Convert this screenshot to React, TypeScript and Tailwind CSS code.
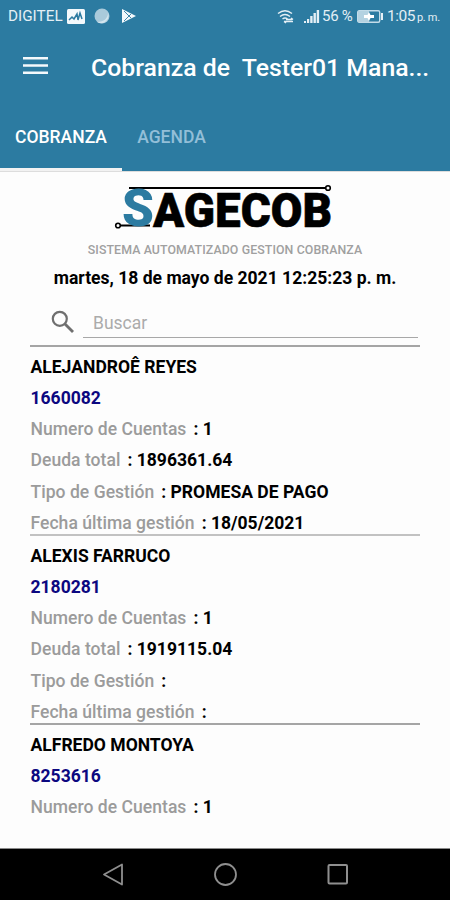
import React from 'react';

const clients = [
  { name: 'ALEJANDROÊ REYES', id: '1660082', accounts: '1', debt: '1896361.64', type: 'PROMESA DE PAGO', date: '18/05/2021', line: 'border-[#a5a5a5]' },
  { name: 'ALEXIS FARRUCO', id: '2180281', accounts: '1', debt: '1919115.04', type: '', date: '', line: 'border-[#c2c2c2]' },
  { name: 'ALFREDO MONTOYA', id: '8253616', accounts: '1', debt: '', type: '', date: '', line: 'border-[#a5a5a5]' },
];

function Field({ label, value }: { label: string; value: string }) {
  return (
    <p className="flex gap-[7px] whitespace-pre">
      <span className="font-medium tracking-[0.030px] text-[#9b9b9b]">{label}</span>
      <span>{`: ${value}`}</span>
    </p>
  );
}

function StatusBar() {
  return (
    <div className="flex h-8 items-center pl-2 text-[#e4eff5]">
      <span className="w-[59px] text-[15.300px] whitespace-nowrap">DIGITEL</span>
      <svg className="h-[15px] w-[18px]" viewBox="0 0 18 15">
        <rect width="18" height="15" rx="1.500" fill="#f4f9fc" />
        <path d="M2 11l3-3 2 2 3-5 1 6 2-7 2 6" fill="none" stroke="#2c7ba1" strokeWidth="1.500" />
      </svg>
      <svg className="ml-[9px] h-4 w-4" viewBox="0 0 16 16">
        <circle cx="8" cy="8" r="7.500" fill="#a9cadb" />
        <path d="M3 14a7.500 7.500 0 0 0 11-9c0 5-4 9-11 9z" fill="#d3e5ee" />
      </svg>
      <svg className="ml-[11px] h-4 w-4" viewBox="0 0 16 16">
        <path d="M1 1l14 7-14 7z" fill="#f4f9fc" />
        <path d="M3 3l7 7M3 13l7-7" stroke="#2c7ba1" strokeWidth="0.900" />
      </svg>
      {/* right side indicators */}
      <svg className="ml-[140px] h-[15px] w-[17px]" viewBox="0 0 17 15" fill="none" stroke="currentColor" strokeWidth="1.400">
        <path d="M1 4.500Q8 -1 15 4.500M3 7.500q5-4 10 0M5.500 10q2.500-2 5 0M7 12.500h9M9 10.500h6M14 9l2 1.500M9 14l-2-1.500" />
      </svg>
      <svg className="ml-[9px] h-[15px] w-[17px]" viewBox="0 0 17 15" fill="currentColor">
        <path d="M1 12h2v2H1zM4 10h2.200v4H4zM7.200 7H9.600v7H7.200zM10.500 4h2.400v10h-2.400zM13.700 1h2.400v13h-2.400z" />
      </svg>
      <span className="ml-[2px] w-[32px] text-[15px] tracking-[-0.3px] whitespace-nowrap">56 %</span>
      <svg className="ml-[3px] h-[13px] w-[26px]" viewBox="0 0 26 13">
        <rect x="0.700" y="0.700" width="22" height="11.600" rx="1.500" fill="none" stroke="#c3dce9" strokeWidth="1.400" />
        <rect x="1" y="1" width="11" height="11" fill="#b4d2e1" />
        <path d="M24 3h2v7h-2z" fill="#e4eff5" />
        <path d="M12 2l1.500 3h3.500v3h-3.500L12 11l-1.500-3H7V5h3.500z" fill="#fff" />
      </svg>
      <span className="ml-[4px] pt-px text-[15.500px] tracking-[-0.500px] whitespace-nowrap">1:05</span>
      <span className="ml-[2px] pt-1 text-[11px] tracking-[-0.300px] whitespace-nowrap">p. m.</span>
    </div>
  );
}

export default function App() {
  return (
    <div className="flex h-[900px] w-[450px] flex-col overflow-hidden bg-[#fdfdfd] font-['Roboto',sans-serif] text-black">
      <header className="h-[171px] shrink-0 bg-[#2c7ba1]">
        <StatusBar />
        <div className="flex h-[69px] items-center pl-[23px] text-white">
          <svg className="mb-[3px] h-[17px] w-[25px]" viewBox="0 0 25 17" fill="#f4f9fc">
            <path d="M0 0h25v2.500H0zM0 7.200h25v2.500H0zM0 14.400h25v2.500H0z" />
          </svg>
          <h1 className="mt-[2px] ml-[43px] text-[24.800px] font-medium whitespace-pre">Cobranza de  Tester01 Mana...</h1>
        </div>
        <nav className="flex h-[70px] text-[17.500px] font-medium">
          <div className="flex w-[122px] items-center justify-center border-b-[3px] border-[#f2f2f2] pt-[5px] text-white">COBRANZA</div>
          <div className="flex w-[99px] items-center justify-center pt-[5px] pb-[3px] text-[#93bfd8]">AGENDA</div>
        </nav>
      </header>

      <main className="h-[677px] shrink-0 overflow-hidden border-t border-[#dddddd] px-[30px] text-[17.550px] font-bold">
        <div className="flex flex-col items-center">
          <svg className="mt-[10px] h-[52px] w-[224px] overflow-visible" viewBox="113 182 224 52">
            <path d="M129 188H325" stroke="#000" strokeWidth="2" />
            <circle cx="328" cy="188" r="2.300" fill="none" stroke="#000" strokeWidth="1.600" />
            <path d="M120 225.500H150" stroke="#000" strokeWidth="2" />
            <circle cx="118" cy="225.500" r="2.300" fill="none" stroke="#000" strokeWidth="1.600" />
            <text x="122" y="226" fontSize="52" fontWeight="900" fill="#2c7ba1" textLength="32" lengthAdjust="spacingAndGlyphs">S</text>
            <text x="153" y="226.500" fontSize="48" fontWeight="900" fill="#000" stroke="#000" strokeWidth="0.600" strokeLinejoin="round" textLength="179" lengthAdjust="spacingAndGlyphs">AGECOB</text>
          </svg>
          <p className="mt-[8px] text-[12.350px] leading-4 font-medium tracking-[0.1px] whitespace-nowrap text-[#a0a0a0]">SISTEMA AUTOMATIZADO GESTION COBRANZA</p>
          <p className="mt-[10px] leading-5 whitespace-nowrap">martes, 18 de mayo de 2021 12:25:23 p. m.</p>
        </div>

        <div className="mt-[17px] flex h-[40px] pl-[21px]">
          <svg className="mt-[5px] h-6 w-6" viewBox="0 0 24 24" fill="none" stroke="#6f6f6f" strokeWidth="2.200">
            <circle cx="8.800" cy="8.800" r="7" />
            <path d="M14 14l8 8" strokeWidth="2.800" />
          </svg>
          <div className="ml-2 h-[33px] w-[335px] border-b border-[#a8a8a8] pl-[10px] text-[17.500px] leading-[36px] font-normal text-[#ababab]">Buscar</div>
        </div>

        {clients.map((client) => (
          <div key={client.id} className={`flex h-[189px] flex-col gap-[11.300px] border-t-2 pt-[9.500px] pl-[0.500px] leading-5 ${client.line}`}>
            <p>{client.name}</p>
            <p className="text-[#0c0880]">{client.id}</p>
            <Field label="Numero de Cuentas" value={client.accounts} />
            {client.debt && (
              <>
                <Field label="Deuda total" value={client.debt} />
                <Field label="Tipo de Gestión" value={client.type} />
                <Field label="Fecha última gestión" value={client.date} />
              </>
            )}
          </div>
        ))}
      </main>

      <footer className="flex h-[52px] shrink-0 items-center justify-center gap-[88px] border-t border-[#8a8a8a] bg-black">
        <svg className="h-6 w-6" viewBox="0 0 24 24" fill="none" stroke="#8f8f8f" strokeWidth="1.800">
          <path d="M21 1.500v20L3 11.500z" strokeLinejoin="round" />
        </svg>
        <svg className="h-6 w-6" viewBox="0 0 24 24" fill="none" stroke="#8f8f8f" strokeWidth="1.800">
          <circle cx="12.500" cy="11.500" r="10.500" />
        </svg>
        <svg className="h-6 w-6" viewBox="0 0 24 24" fill="none" stroke="#8f8f8f" strokeWidth="2">
          <rect x="3.500" y="2" width="18.500" height="18.500" rx="1" />
        </svg>
      </footer>
    </div>
  );
}
